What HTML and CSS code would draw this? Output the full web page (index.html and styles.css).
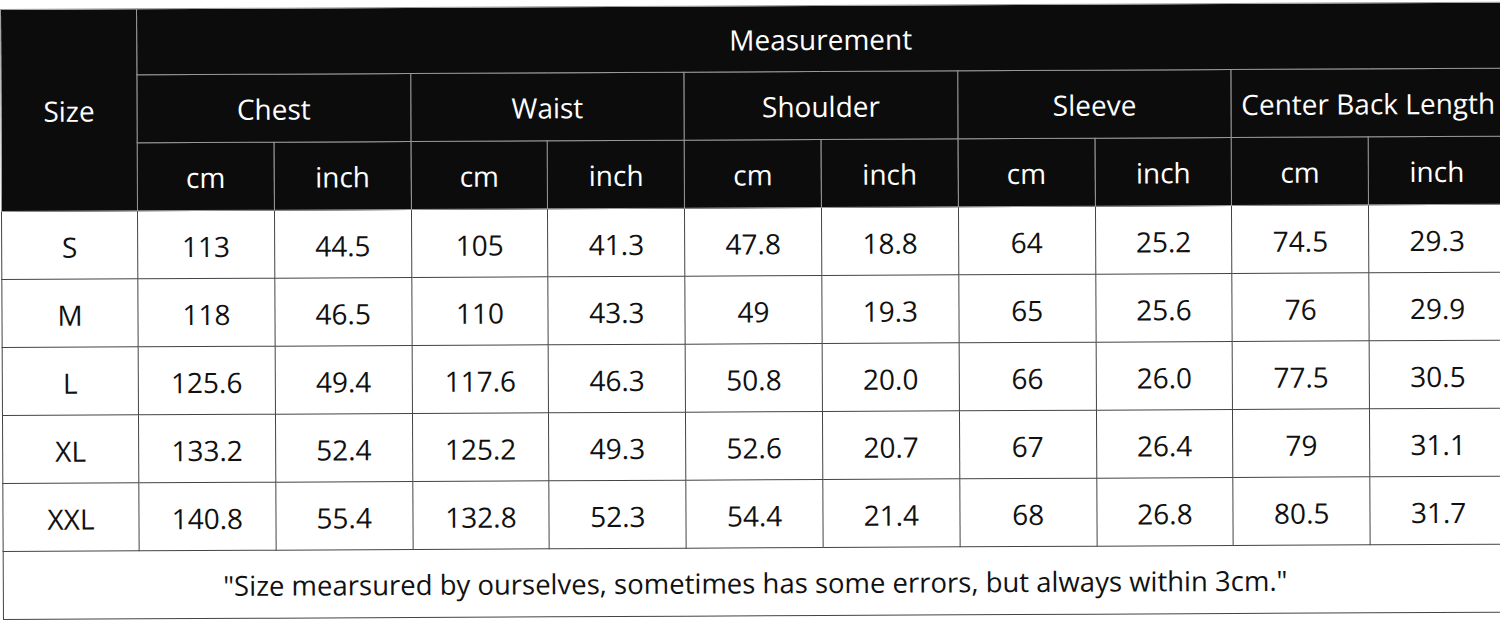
FILE: index.html
```html
<!DOCTYPE html>
<html lang="en">

<head>
    <meta charset="UTF-8">
    <meta name="viewport" content="width=device-width, initial-scale=1.0">
    <title>Size Chart</title>
    <link rel="stylesheet" href="styles.css">
</head>

<body>
    <div class="chart">
        <table class="size-table">
            <colgroup>
                <col class="col-size">
                <col span="10" class="col-val">
            </colgroup>
            <thead>
                <tr class="row-top">
                    <th rowspan="3">Size</th>
                    <th colspan="10">Measurement</th>
                </tr>
                <tr>
                    <th colspan="2">Chest</th>
                    <th colspan="2">Waist</th>
                    <th colspan="2">Shoulder</th>
                    <th colspan="2">Sleeve</th>
                    <th colspan="2">Center Back Length</th>
                </tr>
                <tr>
                    <th>cm</th>
                    <th>inch</th>
                    <th>cm</th>
                    <th>inch</th>
                    <th>cm</th>
                    <th>inch</th>
                    <th>cm</th>
                    <th>inch</th>
                    <th>cm</th>
                    <th>inch</th>
                </tr>
            </thead>
            <tbody>
                <tr>
                    <td>S</td><td>113</td><td>44.5</td><td>105</td><td>41.3</td><td>47.8</td><td>18.8</td><td>64</td><td>25.2</td><td>74.5</td><td>29.3</td>
                </tr>
                <tr>
                    <td>M</td><td>118</td><td>46.5</td><td>110</td><td>43.3</td><td>49</td><td>19.3</td><td>65</td><td>25.6</td><td>76</td><td>29.9</td>
                </tr>
                <tr>
                    <td>L</td><td>125.6</td><td>49.4</td><td>117.6</td><td>46.3</td><td>50.8</td><td>20.0</td><td>66</td><td>26.0</td><td>77.5</td><td>30.5</td>
                </tr>
                <tr>
                    <td>XL</td><td>133.2</td><td>52.4</td><td>125.2</td><td>49.3</td><td>52.6</td><td>20.7</td><td>67</td><td>26.4</td><td>79</td><td>31.1</td>
                </tr>
                <tr>
                    <td>XXL</td><td>140.8</td><td>55.4</td><td>132.8</td><td>52.3</td><td>54.4</td><td>21.4</td><td>68</td><td>26.8</td><td>80.5</td><td>31.7</td>
                </tr>
                <tr class="note">
                    <td colspan="11">"Size mearsured by ourselves, sometimes has some errors, but always within 3cm."</td>
                </tr>
            </tbody>
        </table>
    </div>
</body>

</html>
```

FILE: styles.css
```css
* {
    padding: 0;
    margin: 0;
    box-sizing: border-box;
}

body {
    background: #fff;
    overflow: hidden;
    font-family: 'Open Sans', 'Noto Sans', sans-serif;
    color: #111;
}

.chart {
    padding-top: 9px;
    width: 1510px;
}

.size-table {
    border-collapse: collapse;
    table-layout: fixed;
    width: 1504px;
    transform: rotate(-0.28deg);
    transform-origin: 0 0;
}

.col-size {
    width: 136px;
}

.col-val {
    width: 136.8px;
}

th,
td {
    height: 68px;
    text-align: center;
    vertical-align: middle;
    font-size: 28px;
    font-weight: 400;
}

th {
    background: #0c0c0c;
    color: #fff;
    border: 1.5px solid #9a9a9a;
}

.row-top th {
    height: 66px;
}

td {
    border: 1.5px solid #444;
    padding-top: 2px;
}

.note td {
    font-size: 27.5px;
}
```
